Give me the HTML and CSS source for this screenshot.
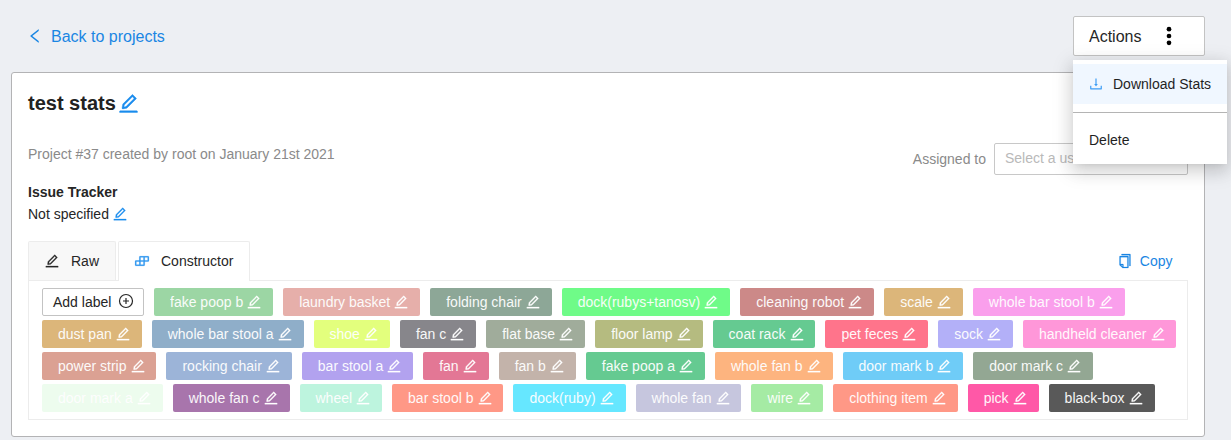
FILE: index.html
```html
<!DOCTYPE html>
<html lang="en">
<head>
<meta charset="utf-8">
<title>Project</title>
<link rel="stylesheet" href="styles.css">
</head>
<body>
<svg class="defs" width="0" height="0">
  <symbol id="edit" viewBox="0 0 1024 1024"><path stroke="currentColor" stroke-width="18" d="M257.7 752c2 0 4-.2 6-.5L431.9 722c2-.4 3.9-1.3 5.3-2.8l423.9-423.9a9.96 9.96 0 000-14.1L694.9 114.9c-1.900-1.900-4.400-2.900-7.100-2.900s-5.200 1-7.100 2.900L256.800 538.800c-1.500 1.500-2.400 3.300-2.800 5.300l-29.500 168.200a33.500 33.500 0 009.400 29.800c6.600 6.400 14.900 9.900 23.800 9.900zm67.400-174.400L687.800 215l73.300 73.300-362.700 362.600-88.900 15.700 15.600-89zM880 836H144c-17.700 0-32 14.300-32 32v36c0 4.400 3.600 8 8 8h784c4.400 0 8-3.600 8-8v-36c0-17.700-14.300-32-32-32z"/></symbol>
</svg>
<div class="page">
  <header class="topbar">
    <a class="back">
      <svg class="i18" viewBox="0 0 1024 1024"><path d="M724 218.300V141c0-6.700-7.700-10.400-12.900-6.300L260.300 486.800a31.860 31.860 0 000 50.300l450.800 352.100c5.300 4.100 12.900.4 12.900-6.300v-77.300c0-4.900-2.300-9.600-6.100-12.600l-360-281 360-281.100c3.800-3 6.100-7.700 6.100-12.600z"/></svg>
      <span>Back to projects</span>
    </a>
    <div class="actions">
      <button class="actions-btn"><span>Actions</span>
        <svg class="dots" viewBox="0 0 6 20"><circle cx="3" cy="3.200" r="2.350"/><circle cx="3" cy="10" r="2.350"/><circle cx="3" cy="16.800" r="2.350"/></svg>
      </button>
      <div class="menu">
        <div class="menu-item active">
          <svg class="i16" viewBox="0 0 1024 1024"><path d="M505.700 661a8 8 0 0012.600 0l112-141.700c4.100-5.200.4-12.900-6.300-12.900h-74.100V168c0-4.400-3.600-8-8-8h-60c-4.400 0-8 3.600-8 8v338.300H400c-6.700 0-10.400 7.700-6.300 12.900l112 141.800zM878 626h-60c-4.400 0-8 3.600-8 8v154H214V634c0-4.400-3.600-8-8-8h-60c-4.400 0-8 3.600-8 8v198c0 17.700 14.300 32 32 32h684c17.700 0 32-14.300 32-32V634c0-4.400-3.600-8-8-8z"/></svg>
          <span>Download Stats</span>
        </div>
        <div class="menu-divider"></div>
        <div class="menu-item">Delete</div>
      </div>
    </div>
  </header>
  <main class="card">
    <div class="title"><h1>test stats</h1><svg class="title-edit"><use href="#edit"/></svg></div>
    <div class="meta">
      <p class="created">Project #37 created by root on January 21st 2021</p>
      <div class="assign"><span>Assigned to</span><div class="select">Select a user</div></div>
    </div>
    <div class="tracker">
      <strong>Issue Tracker</strong>
      <div class="tracker-value"><span>Not specified</span><svg class="i16"><use href="#edit"/></svg></div>
    </div>
    <div class="tabs">
      <div class="tab raw"><svg class="i16"><use href="#edit"/></svg><span>Raw</span></div>
      <div class="tab current"><svg class="i16" viewBox="0 0 1024 1024"><path stroke="currentColor" stroke-width="16" d="M916 210H376c-17.700 0-32 14.300-32 32v236H108c-17.700 0-32 14.300-32 32v272c0 17.700 14.300 32 32 32h540c17.700 0 32-14.300 32-32V546h236c17.700 0 32-14.300 32-32V242c0-17.700-14.300-32-32-32zm-504 68h200v200H412V278zm-68 468H144V546h200v200zm268 0H412V546h200v200zm268-268H680V278h200v200z"/></svg><span>Constructor</span></div>
      <div class="copy"><svg class="i16" viewBox="0 0 1024 1024"><path stroke="currentColor" stroke-width="14" d="M832 64H296c-4.400 0-8 3.600-8 8v56c0 4.400 3.600 8 8 8h496v688c0 4.400 3.600 8 8 8h56c4.400 0 8-3.600 8-8V96c0-17.700-14.300-32-32-32zM704 192H192c-17.700 0-32 14.300-32 32v530.700c0 8.500 3.400 16.600 9.400 22.600l173.300 173.300c2.200 2.200 4.700 4 7.400 5.500v1.900h4.200c3.500 1.300 7.200 2 11 2H704c17.700 0 32-14.300 32-32V224c0-17.700-14.300-32-32-32zM350 856.200L263.900 770H350v86.200zM664 888H414V746c0-22.100-17.900-40-40-40H232V264h432v624z"/></svg><span>Copy</span></div>
    </div>
    <section class="labels">
      <div class="row">
        <button class="add"><span>Add label</span><svg class="i16 plus" viewBox="0 0 16 16"><circle cx="8" cy="8" r="6.500"/><path d="M8 5v6M5 8h6"/></svg></button>
        <div class="label c1"><span>fake poop b</span><svg><use href="#edit"/></svg></div>
        <div class="label c2"><span>laundry basket</span><svg><use href="#edit"/></svg></div>
        <div class="label c3"><span>folding chair</span><svg><use href="#edit"/></svg></div>
        <div class="label c4"><span>dock(rubys+tanosv)</span><svg><use href="#edit"/></svg></div>
        <div class="label c5"><span>cleaning robot</span><svg><use href="#edit"/></svg></div>
        <div class="label c6"><span>scale</span><svg><use href="#edit"/></svg></div>
        <div class="label c7"><span>whole bar stool b</span><svg><use href="#edit"/></svg></div>
      </div>
      <div class="row">
        <div class="label c6"><span>dust pan</span><svg><use href="#edit"/></svg></div>
        <div class="label c8"><span>whole bar stool a</span><svg><use href="#edit"/></svg></div>
        <div class="label c9"><span>shoe</span><svg><use href="#edit"/></svg></div>
        <div class="label c10"><span>fan c</span><svg><use href="#edit"/></svg></div>
        <div class="label c11"><span>flat base</span><svg><use href="#edit"/></svg></div>
        <div class="label c12"><span>floor lamp</span><svg><use href="#edit"/></svg></div>
        <div class="label c13"><span>coat rack</span><svg><use href="#edit"/></svg></div>
        <div class="label c14"><span>pet feces</span><svg><use href="#edit"/></svg></div>
        <div class="label c15"><span>sock</span><svg><use href="#edit"/></svg></div>
        <div class="label c16"><span>handheld cleaner</span><svg><use href="#edit"/></svg></div>
      </div>
      <div class="row">
        <div class="label c17"><span>power strip</span><svg><use href="#edit"/></svg></div>
        <div class="label c18"><span>rocking chair</span><svg><use href="#edit"/></svg></div>
        <div class="label c19"><span>bar stool a</span><svg><use href="#edit"/></svg></div>
        <div class="label c20"><span>fan</span><svg><use href="#edit"/></svg></div>
        <div class="label c21"><span>fan b</span><svg><use href="#edit"/></svg></div>
        <div class="label c13"><span>fake poop a</span><svg><use href="#edit"/></svg></div>
        <div class="label c22"><span>whole fan b</span><svg><use href="#edit"/></svg></div>
        <div class="label c23"><span>door mark b</span><svg><use href="#edit"/></svg></div>
        <div class="label c24"><span>door mark c</span><svg><use href="#edit"/></svg></div>
      </div>
      <div class="row">
        <div class="label c25"><span>door mark a</span><svg><use href="#edit"/></svg></div>
        <div class="label c26"><span>whole fan c</span><svg><use href="#edit"/></svg></div>
        <div class="label c27"><span>wheel</span><svg><use href="#edit"/></svg></div>
        <div class="label c28"><span>bar stool b</span><svg><use href="#edit"/></svg></div>
        <div class="label c29"><span>dock(ruby)</span><svg><use href="#edit"/></svg></div>
        <div class="label c30"><span>whole fan</span><svg><use href="#edit"/></svg></div>
        <div class="label c31"><span>wire</span><svg><use href="#edit"/></svg></div>
        <div class="label c28"><span>clothing item</span><svg><use href="#edit"/></svg></div>
        <div class="label c32"><span>pick</span><svg><use href="#edit"/></svg></div>
        <div class="label c33"><span>black-box</span><svg><use href="#edit"/></svg></div>
      </div>
    </section>
  </main>
</div>
</body>
</html>
```

FILE: styles.css
```css
* { box-sizing: border-box; }
body {
  margin: 0;
  background: #edeff3;
  color: #262626;
  font: 14px/22px "Liberation Sans", Arial, sans-serif;
  overflow: hidden;
}
svg { fill: currentColor; flex: none; display: block; }
.defs { position: absolute; }
.i16 { width: 16px; height: 16px; }
.i18 { width: 18px; height: 18px; }
h1, p { margin: 0; }
button { font: inherit; color: inherit; background: #fff; border: 1px solid #c3c3c3; border-radius: 2px; }

.page { padding: 16px 26px 0 11px; height: 440px; }
.topbar { display: flex; justify-content: space-between; height: 40px; font-size: 16px; }
.topbar .back span, .actions-btn span { padding-top: 2px; }
.back { display: flex; align-items: center; gap: 7px; padding-left: 15px; color: #1a86e3; }
.actions { position: relative; width: 132px; }
.actions-btn { display: flex; align-items: center; width: 132px; height: 40px; padding: 0 15px; gap: 25px; }
.dots { width: 6px; height: 20px; color: #000; }

.menu {
  position: absolute; top: 44px; left: 0; z-index: 2;
  width: 154px; height: 104px; padding-top: 4px;
  background: #fff; color: #1f1f1f; font-size: 14px;
  box-shadow: 0 3px 6px -4px rgba(0,0,0,.12), 0 6px 16px rgba(0,0,0,.1), 0 5px 18px 4px rgba(0,0,0,.1);
}
.menu-item { display: flex; align-items: center; height: 40px; padding: 0 0 0 16px; white-space: nowrap; }
.menu-item.active { padding-left: 15px; gap: 9px; background: #f0f7ff; }
.menu-item svg { color: #3d9df5; }
.menu-divider { height: 1px; margin: 8px 0 7px; background: #b4b4b4; }

.card {
  width: 1194px; height: 365px; margin-top: 16px; padding: 0 16px;
  background: #fff; border: 1px solid #b3b3b5; border-radius: 3px;
}
.title { display: flex; align-items: flex-start; height: 70px; padding-top: 18px; }
.title h1 { font-size: 20px; line-height: 24px; color: #222; }
.title-edit { width: 23px; height: 23px; margin: 1px 0 0 1px; color: #1a8cee; }
.meta { display: flex; justify-content: space-between; height: 38px; color: #8a8a8a; }
.assign { display: flex; align-items: center; gap: 8px; height: 32px; }
.select { width: 194px; height: 32px; padding: 0 10px; border: 1px solid #c8c8c8; border-radius: 2px; line-height: 29px; color: #b9b9b9; }
.tracker { height: 60px; }
.tracker strong { display: block; }
.tracker-value { display: flex; align-items: center; gap: 3px; }
.tracker-value svg { color: #1a8cee; }
.tabs { display: flex; height: 40px; gap: 2px; }
.tab { display: flex; align-items: center; height: 39px; padding: 0 15px; gap: 11px; border: 1px solid #ececec; border-bottom: 0; border-radius: 2px 2px 0 0; }
.raw { width: 88px; background: #f8f8f8; }
.current { width: 132px; height: 40px; padding-bottom: 1px; background: #fff; }
.current svg { color: #1a8cee; }
.copy { display: flex; align-items: center; gap: 6.500px; margin-left: auto; padding-right: 15.500px; color: #1a86e3; }
.meta .created { line-height: 22px; }

.labels { height: 140px; margin-top: -1px; padding: 7px 0 0 13px; border: 1px solid #ececec; }
.tab.current { position: relative; z-index: 1; }
.row { display: flex; gap: 10px; height: 28px; margin-bottom: 4px; }
.add { display: flex; align-items: center; width: 102px; height: 28px; padding: 0 9px 0 10px; gap: 7px; white-space: nowrap; }
.plus { margin-top: -2px; fill: none; stroke: currentColor; stroke-width: 1.200px; }
.label { display: flex; align-items: center; height: 28px; padding: 0 10.800px 0 16px; border-radius: 2px; color: #fff; white-space: nowrap; }
.label span { opacity: .94; }
.label svg { width: 16px; height: 16px; margin-left: 3.200px; }

.c1 { background: #9cd6a4; }
.c2 { background: #e6afaa; }
.c3 { background: #8da797; }
.c4 { background: #6ffb88; }
.c5 { background: #cc8988; }
.c6 { background: #dcb67a; }
.c7 { background: #fa9fec; }
.c8 { background: #8faec9; }
.c9 { background: #e3ff7d; }
.c10 { background: #87868b; }
.c11 { background: #a0ac9b; }
.c12 { background: #b5bb80; }
.c13 { background: #65ca91; }
.c14 { background: #ff748b; }
.c15 { background: #b3b0f8; }
.c16 { background: #ff97d9; }
.c17 { background: #dba193; }
.c18 { background: #9cb4d8; }
.c19 { background: #b2a2ef; }
.c20 { background: #e37795; }
.c21 { background: #c3b3aa; }
.c22 { background: #fdb47f; }
.c23 { background: #6fccf7; }
.c24 { background: #93a793; }
.c25 { background: #edfcee; }
.c26 { background: #a875ac; }
.c27 { background: #bdf4de; }
.c28 { background: #ff9886; }
.c29 { background: #66e7ff; }
.c30 { background: #c6c6de; }
.c31 { background: #a5eba4; }
.c32 { background: #ff58a7; }
.c33 { background: #595959; }
```
